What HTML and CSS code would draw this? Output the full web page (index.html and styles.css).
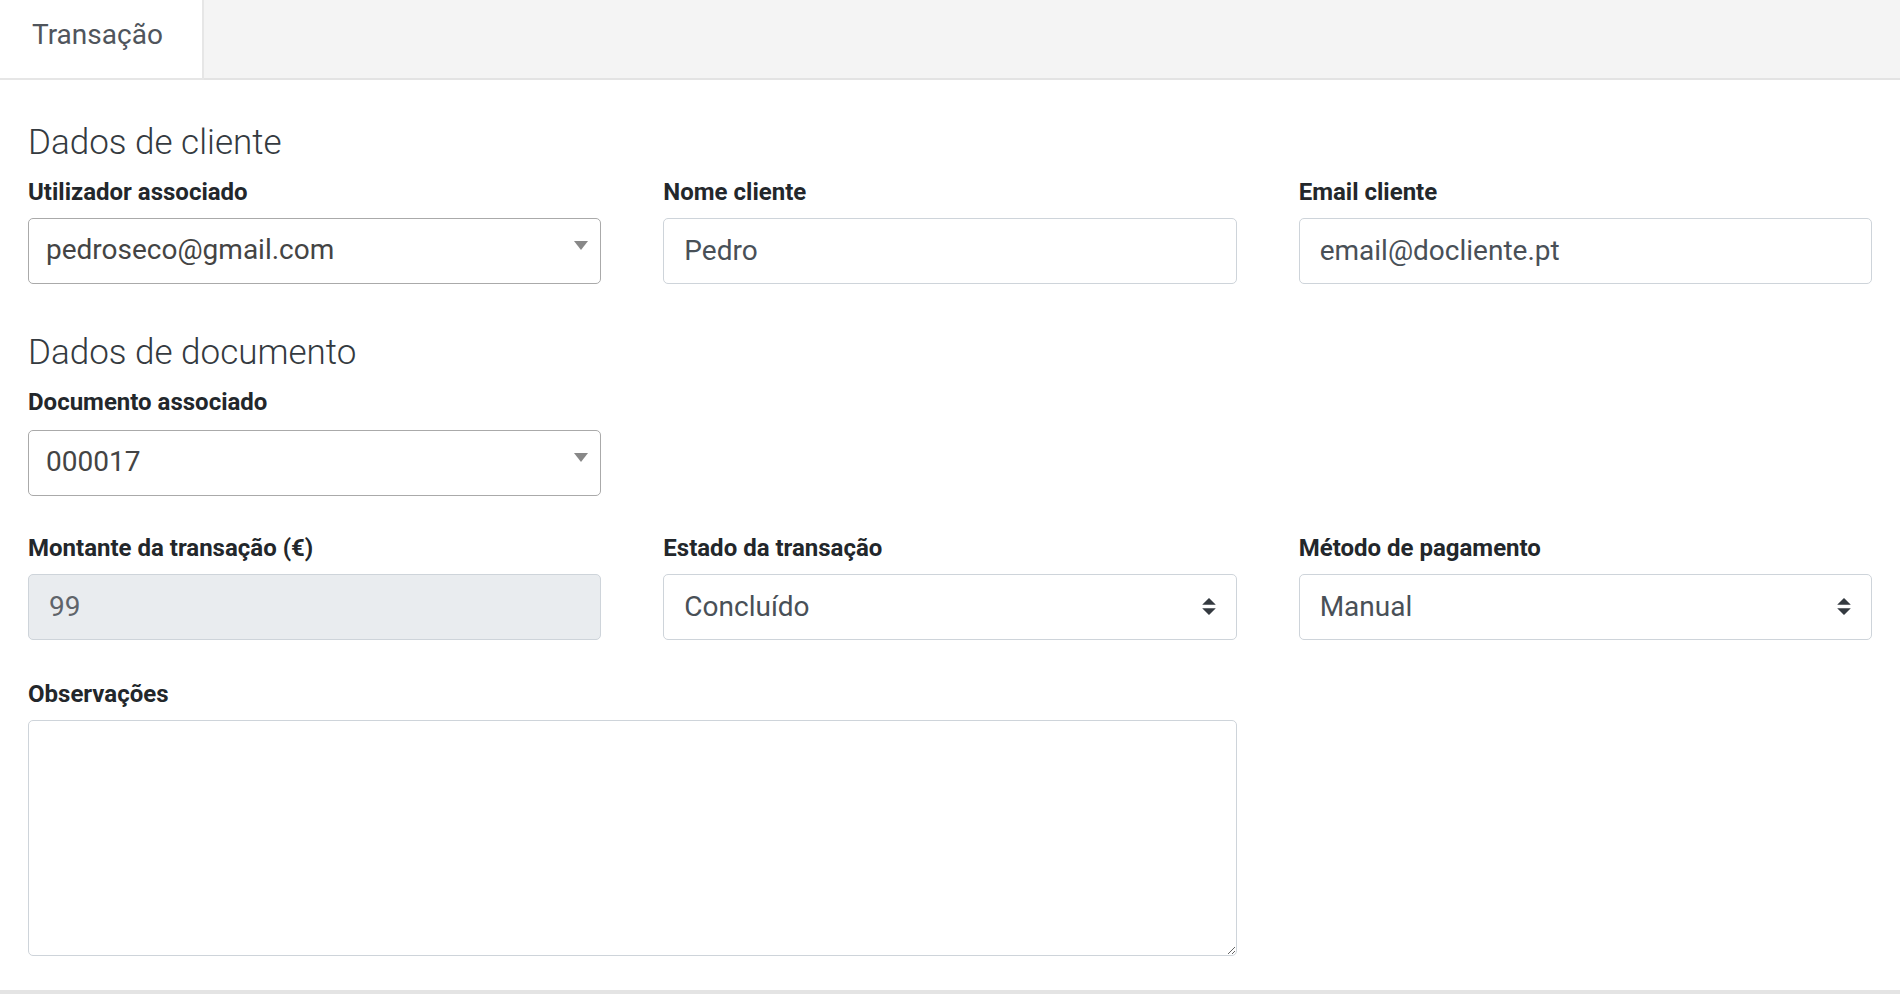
FILE: index.html
```html
<!DOCTYPE html>
<html lang="pt">
<head>
<meta charset="utf-8">
<title>Transação</title>
<link rel="stylesheet" href="styles.css">
</head>
<body>
<div class="tabs">
  <div class="tab">Transação</div>
  <div class="tab-fill"></div>
</div>
<div class="panel">
  <h4 class="section-title">Dados de cliente</h4>
  <div class="row3">
    <div class="group">
      <label class="lbl">Utilizador associado</label>
      <div class="s2">
        <span class="s2-text">pedroseco@gmail.com</span>
        <span class="s2-arrow"></span>
      </div>
    </div>
    <div class="group">
      <label class="lbl">Nome cliente</label>
      <input class="fc" type="text" value="Pedro">
    </div>
    <div class="group">
      <label class="lbl">Email cliente</label>
      <input class="fc" type="text" value="email@docliente.pt">
    </div>
  </div>

  <h4 class="section-title second">Dados de documento</h4>
  <div class="row3">
    <div class="group doc">
      <label class="lbl">Documento associado</label>
      <div class="s2">
        <span class="s2-text">000017</span>
        <span class="s2-arrow"></span>
      </div>
    </div>
  </div>
  <div class="row3">
    <div class="group">
      <label class="lbl">Montante da transação (€)</label>
      <input class="fc fc-disabled" type="text" value="99" disabled>
    </div>
    <div class="group">
      <label class="lbl">Estado da transação</label>
      <div class="cs-wrap">
        <select class="fc cs"><option>Concluído</option></select>
        <svg class="cs-arrows" viewBox="0 0 4 5" aria-hidden="true"><path d="M2 0L0 2h4zm0 5L0 3h4z"/></svg>
      </div>
    </div>
    <div class="group">
      <label class="lbl">Método de pagamento</label>
      <div class="cs-wrap">
        <select class="fc cs"><option>Manual</option></select>
        <svg class="cs-arrows" viewBox="0 0 4 5" aria-hidden="true"><path d="M2 0L0 2h4zm0 5L0 3h4z"/></svg>
      </div>
    </div>
  </div>
  <div class="row3">
    <div class="group span2 last">
      <label class="lbl">Observações</label>
      <textarea class="fc ta"></textarea>
    </div>
  </div>
</div>
<div class="footer-line"></div>
</body>
</html>
```

FILE: styles.css
```css
* { box-sizing: border-box; }
html, body { margin: 0; padding: 0; background: #fff; }
body {
  font-family: Roboto, "Liberation Sans", Arial, sans-serif;
  color: #212529;
  width: 1900px;
  height: 994px;
  overflow: hidden;
}

.tabs {
  display: flex;
  height: 80px;
  background: #f4f4f4;
  border-bottom: 2px solid #e3e3e3;
}
.tab {
  width: 204px;
  height: 80px;
  background: #fff;
  border-right: 2px solid #e6e6e6;
  border-bottom: 2px solid #e6e6e6;
  padding: 15px 0 0 32px;
  font-size: 28px;
  line-height: 40.8px;
  color: #50555c;
}
.tab-fill { flex: 1; }

.panel {
  padding: 43px 28px 0 28px;
}
.section-title {
  margin: 0 0 12px 0;
  font-size: 35px;
  line-height: 40.8px;
  font-weight: 300;
  color: #343a40;
}
.section-title.second { margin-top: 11px; }

.row3 {
  display: grid;
  grid-template-columns: repeat(3, 1fr);
  column-gap: 62px;
}
.group { margin-bottom: 38px; }
.group.doc { margin-bottom: 36px; }
.group.doc .lbl { margin-bottom: 12px; }
.group.span2 { grid-column: span 2; }
.group.last { margin-bottom: 34px; }

.lbl {
  display: block;
  font-size: 24px;
  line-height: 32px;
  font-weight: 700;
  color: #23272b;
  margin-bottom: 10px;
}

.fc {
  display: block;
  width: 100%;
  height: 66px;
  padding: 0 20px 0 20px;
  font-family: Roboto, "Liberation Sans", Arial, sans-serif;
  font-size: 28px;
  color: #495057;
  background: #fff;
  border: 1.5px solid #ced4da;
  border-radius: 5px;
  outline: none;
}
.fc-disabled {
  background: #e9ecef;
  color: #5f646a;
  opacity: 1;
}

.s2 {
  position: relative;
  height: 66px;
  border: 1.5px solid #aaaaaa;
  border-radius: 5px;
  background: #fff;
  padding: 7px 0 0 17px;
}
.s2-text {
  font-size: 28px;
  line-height: 47px;
  color: #444;
}
.s2-arrow {
  position: absolute;
  right: 12px;
  top: 22px;
  width: 0;
  height: 0;
  border-style: solid;
  border-width: 9px 7px 0 7px;
  border-color: #888 transparent transparent transparent;
}

.cs-wrap { position: relative; }
.cs {
  -webkit-appearance: none;
  appearance: none;
  line-height: 40px;
}
.cs-arrows {
  position: absolute;
  right: 21px;
  top: 24px;
  width: 14px;
  height: 17px;
  fill: #343a40;
}

.ta {
  height: 236px;
  padding: 10px 20px;
  resize: vertical;
}

.footer-line {
  height: 4px;
  background: #e4e4e4;
}
```
